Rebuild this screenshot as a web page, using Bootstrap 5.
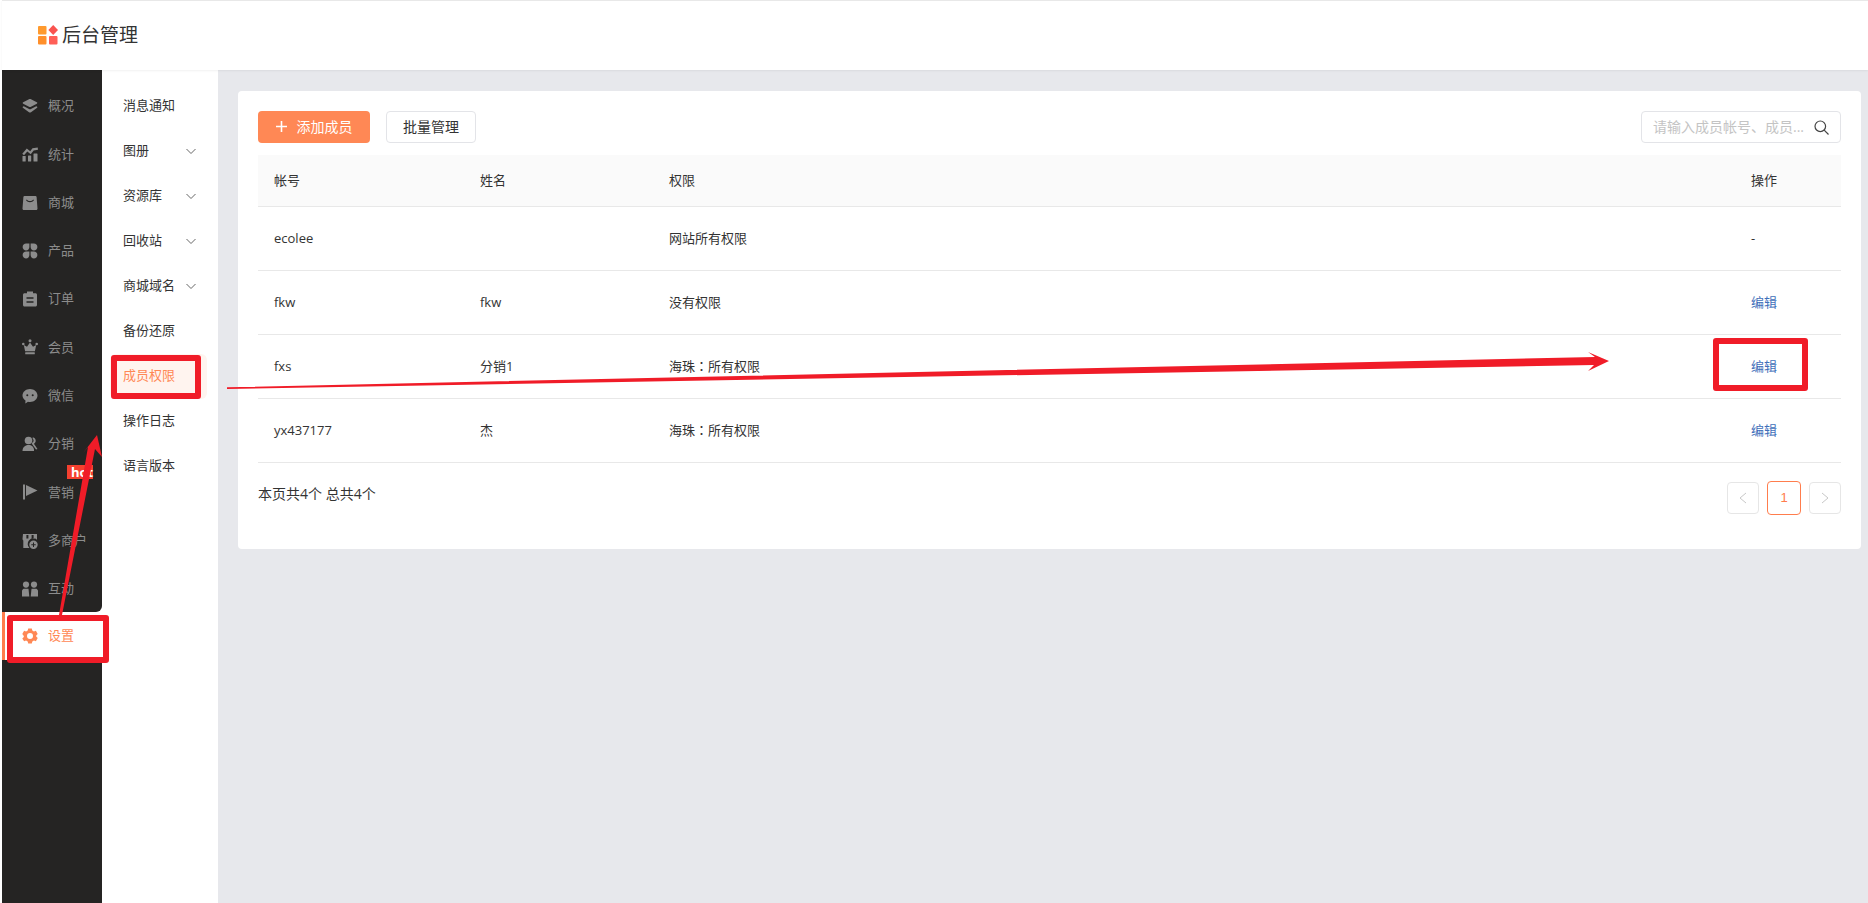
<!DOCTYPE html>
<html lang="zh-CN">
<head>
<meta charset="utf-8">
<title>后台管理</title>
<link href="https://cdn.jsdelivr.net/npm/bootstrap@5.3.0/dist/css/bootstrap.min.css" rel="stylesheet">
<style>
html,body{height:100%}
body{background:#e7e8ec;font-family:"Open Sans","Noto Sans CJK SC",sans-serif;font-size:13px;color:#333;overflow:hidden;position:relative}
.page-shell{height:903px;padding-left:2px;background:linear-gradient(#fff,#fff) left/2px 100% no-repeat}
.top-head{height:70px;background:#fff;border-top:1px solid #e8e8e8;padding-left:36px;padding-bottom:1px;box-shadow:0 1px 2px rgba(0,0,0,.06);position:relative}
.top-title{font-size:19px;color:#333;margin-left:4px}
.main-body{height:833px}
.nav-dark{width:100px;background:#252423;flex:none}
.dark-wrap{background:#fff;height:542px}
.dark-upper{height:542px;background:#252423;padding-top:12px;border-bottom-right-radius:6px}
.nav-one{height:48.27px;padding-left:20px;color:#8c8c8c;gap:10px;position:relative;white-space:nowrap}
.nav-one svg{width:16px;height:16px;fill:#8c8c8c;flex:none}
.nav-active{height:48px;background:#fff;color:#ff8855;border-left:3px solid #ff7d4d;padding-left:17px}
.nav-active svg{fill:#ff8855}
.hot-tag{position:absolute;left:65px;top:45px;width:26px;height:14px;background:#f5402f;color:#fff;font-size:13px;font-weight:700;line-height:14px;padding-left:4px}
.nav-sub{width:116px;background:#fff;flex:none;padding-top:13.5px}
.sub-one{height:45px;padding:0 22px 0 21px;color:#333;margin:0}
.sub-one svg{width:10px;height:10px;stroke:#666;fill:none;stroke-width:1}
.sub-active{color:#ff8855;background:#fff4ef;border-radius:6px;margin:0 11px 0 8px;padding:0 13px;height:45px}
.content-area{padding:21px 7px 0 20px;min-width:0}
.panel-main{background:#fff;border-radius:4px;height:458px;padding:20px}
.tool-row{height:32px;margin-bottom:12px}
.btn-add{background:#ff8855;color:#fff;border:0;border-radius:4px;width:112px;height:32px;font-size:14px;padding:0 0 2px;gap:10px}
.btn-add:hover{background:#ff8855;color:#fff}
.btn-batch{background:#fff;color:#333;border:1px solid #e3e4e8;border-radius:4px;width:90px;height:32px;font-size:14px;padding:0 0 2px;margin-left:16px}
.search-wrap{width:200px;height:32px;border:1px solid #e3e4e8;border-radius:4px;padding:0 11px}
.search-wrap span{color:#c4c4c4;white-space:nowrap;font-size:14px;margin-bottom:2px}
.search-wrap svg{width:15px;height:15px;stroke:#444;fill:none;stroke-width:1.2;flex:none}
.data-grid{--bs-table-border-color:#e8e8e8;table-layout:fixed;margin-bottom:0;color:#333;width:1583px}
.data-grid th{background:#fafafa;font-weight:400;height:51px;vertical-align:middle;padding:0 16px;font-size:13px;color:#333}
.data-grid td{height:64px;vertical-align:middle;padding:1px 16px 0;font-size:13px;color:#333}
.data-grid .edit-link{color:#3f6fba;text-decoration:none}
.colon-mid{font-family:"Noto Sans CJK TC",sans-serif}
.pager-row{padding-top:18px}
.page-info{padding-top:2px;font-size:14px}
.page-cell{width:32px;height:32px;border:1px solid #e6e6e6;border-radius:4px;background:#fff;padding:0}
.page-cell svg{width:10px;height:12px;stroke:#c8c8c8;fill:none;stroke-width:1}
.page-now{width:34px;height:34px;border-color:#ff7d4d;color:#ff7d4d;font-family:"Liberation Sans",sans-serif;font-size:13px}
.mark-box{position:absolute;border:6px solid #f01c28;border-radius:3px;pointer-events:none}
.mark-arrows{position:absolute;left:0;top:0;width:1868px;height:903px;pointer-events:none}
</style>
</head>
<body>
<div class="page-shell d-flex flex-column">
  <header class="top-head d-flex align-items-center">
    <svg width="20" height="20" viewBox="0 0 20 20"><rect x="0" y="1" width="8.5" height="8.500" rx="1" fill="#ff9a2e"/><rect x="0" y="11" width="8.5" height="8.500" rx="1" fill="#ff8f2a"/><rect x="11" y="11" width="8.5" height="8.500" rx="1" fill="#ff5f57"/><path d="M15.200 0l4.800 5-4.800 5-4.800-5z" fill="#f9534f"/></svg>
    <span class="top-title">后台管理</span>
  </header>
  <div class="main-body d-flex">
    <nav class="nav-dark d-flex flex-column">
      <div class="dark-wrap"><div class="dark-upper">
        <div class="nav-one d-flex align-items-center"><svg viewBox="0 0 16 16"><path d="M8 1c.4 0 .7.1 1 .3l5.800 3c.7.4.7 1 0 1.400l-5.800 3c-.6.300-1.400.300-2 0l-5.800-3c-.7-.4-.7-1 0-1.400l5.800-3C7.300 1.100 7.600 1 8 1z"/><path d="M1.800 8.200L7 10.900c.6.300 1.400.300 2 0l5.200-2.700.6.300c.7.4.7 1.200 0 1.600L9 14.300c-.6.300-1.400.300-2 0l-5.800-4.200c-.7-.4-.7-1.200 0-1.600z"/></svg>概况</div>
        <div class="nav-one d-flex align-items-center"><svg viewBox="0 0 16 16"><path d="M.3 7.800L4.800 2.500l3.400 2.700 2.300-2.900 5.200-.8.300 2.200-4.300.7-3 3.800-3.400-2.700L2 9.300z"/><rect x=".5" y="10" width="3.200" height="5.500" rx=".5"/><rect x="6" y="9.500" width="3.200" height="6" rx=".5"/><rect x="11.500" y="7.500" width="4" height="8" rx=".5"/></svg>统计</div>
        <div class="nav-one d-flex align-items-center"><svg viewBox="0 0 16 16"><path fill-rule="evenodd" d="M2.500 1h11c.6 0 1 .4 1.100 1l.9 11.500c.1.800-.5 1.500-1.300 1.500H1.800C1 15 .4 14.300.5 13.500L1.400 2c.1-.6.500-1 1.100-1zM4.800 4.400l-.8.9C5 6.600 6.400 7.300 8 7.300s3-.7 4-2l-.8-.9C10.400 5.400 9.300 6 8 6s-2.400-.6-3.200-1.600z"/></svg>商城</div>
        <div class="nav-one d-flex align-items-center"><svg viewBox="0 0 16 16"><path d="M4.100.6h3.300v3.300c0 1.900-1.500 3.500-3.300 3.500S.6 5.900.6 4 2.200.6 4.100.6z"/><path d="M11.900.6c1.900 0 3.500 1.500 3.500 3.400s-1.600 3.400-3.500 3.400-3.300-1.600-3.300-3.500V.6z"/><path d="M4.100 8.600h3.300v3.300c0 1.900-1.500 3.500-3.300 3.500S.6 13.900.6 12s1.600-3.400 3.500-3.400z"/><path d="M8.600 8.600h3.300c1.900 0 3.500 1.500 3.500 3.400s-1.600 3.400-3.500 3.400-3.300-1.600-3.300-3.500z"/></svg>产品</div>
        <div class="nav-one d-flex align-items-center"><svg viewBox="0 0 16 16"><path fill-rule="evenodd" d="M5 .5h6v1.800h2.500c.8 0 1.500.7 1.500 1.500v10.200c0 .8-.7 1.500-1.500 1.500h-11c-.8 0-1.500-.7-1.500-1.500V3.800c0-.8.7-1.500 1.500-1.500H5zM4.500 6.300v1.500h7V6.300zM4.500 10.300v1.500h7v-1.500z"/></svg>订单</div>
        <div class="nav-one d-flex align-items-center"><svg viewBox="0 0 16 16"><circle cx="8" cy="1.800" r="1.500"/><circle cx="1.300" cy="5" r="1.300"/><circle cx="14.700" cy="5" r="1.300"/><path d="M8 3.500l3 4.200 3.200-1.700-1.300 6.300H3.100L1.800 6 5 7.700z"/><rect x="3.200" y="13.200" width="9.600" height="2" rx=".5"/></svg>会员</div>
        <div class="nav-one d-flex align-items-center"><svg viewBox="0 0 16 16"><path fill-rule="evenodd" d="M8 1c4.100 0 7.500 2.900 7.500 6.500S12.100 14 8 14c-.7 0-1.400-.1-2-.2L3.300 15.500l.2-3C1.700 11.300.5 9.500.5 7.500.5 3.900 3.900 1 8 1zM5.300 6.300a1 1 0 1 0 0 2 1 1 0 0 0 0-2zM10.700 6.300a1 1 0 1 0 0 2 1 1 0 0 0 0-2z"/></svg>微信</div>
        <div class="nav-one d-flex align-items-center"><svg viewBox="0 0 16 16"><circle cx="6.500" cy="4.500" r="3.800"/><path d="M.5 15c0-3.500 2.500-6 6-6s5 2 5.500 4.500V15z"/><path d="M10.800 1.200c1.800.5 2.900 1.900 2.900 3.500 0 1.300-.7 2.400-1.800 3l3.600 5.300-1.500.6-3.700-5.100-.6-1.500c1.200-.5 1.900-1.400 1.900-2.500 0-.9-.4-1.600-1-2.100z"/></svg>分销<span class="hot-tag">hot</span></div>
        <div class="nav-one d-flex align-items-center"><svg viewBox="0 0 16 16"><rect x="1" y=".5" width="2" height="15"/><path d="M4 1l11.500 5.500L4 12z"/></svg>营销</div>
        <div class="nav-one d-flex align-items-center"><svg viewBox="0 0 16 16"><path fill-rule="evenodd" d="M1 1h14v5.800a5 5 0 0 0-7.500 8.200H1.300V7.500A2 2 0 0 1 .5 6zM4.400 2v3.500h2V2zM9.600 2v3.500h2V2z"/><path fill-rule="evenodd" d="M11.500 7.500a4.200 4.200 0 1 1 0 8.400 4.200 4.200 0 0 1 0-8.400zM11 9.500v1.700H9.300v1H11v1.700h1v-1.700h1.700v-1H12V9.500z"/></svg>多商户</div>
        <div class="nav-one d-flex align-items-center"><svg viewBox="0 0 16 16"><circle cx="4" cy="3.600" r="3.100"/><circle cx="12" cy="3.600" r="3.100"/><path d="M1.500 7.800h5L7.300 15.500H0V9.300z"/><path d="M9.500 7.800h5L16 9.300v6.200H8.700z"/></svg>互动</div>
      </div></div>
      <div class="nav-one nav-active d-flex align-items-center"><svg viewBox="0 0 16 16"><path fill-rule="evenodd" d="M6.200.4h3.600l.5 2.100 1.600.9 2-.6 1.800 3.100-1.500 1.500v1.200l1.500 1.500-1.800 3.100-2-.6-1.600.9-.5 2.100H6.200l-.5-2.100-1.600-.9-2 .6L.3 10.600l1.500-1.500V7.900L.3 5.900l1.800-3.100 2 .6 1.600-.9zM8 5a3 3 0 1 0 0 6 3 3 0 0 0 0-6z"/></svg>设置</div>
    </nav>
    <aside class="nav-sub">
      <div class="sub-one d-flex align-items-center">消息通知</div>
      <div class="sub-one d-flex align-items-center justify-content-between">图册<svg viewBox="0 0 10 10"><path d="M.5 3l4.500 4.500L9.500 3"/></svg></div>
      <div class="sub-one d-flex align-items-center justify-content-between">资源库<svg viewBox="0 0 10 10"><path d="M.5 3l4.500 4.500L9.500 3"/></svg></div>
      <div class="sub-one d-flex align-items-center justify-content-between">回收站<svg viewBox="0 0 10 10"><path d="M.5 3l4.500 4.500L9.500 3"/></svg></div>
      <div class="sub-one d-flex align-items-center justify-content-between">商城域名<svg viewBox="0 0 10 10"><path d="M.5 3l4.500 4.500L9.500 3"/></svg></div>
      <div class="sub-one d-flex align-items-center">备份还原</div>
      <div class="sub-one sub-active d-flex align-items-center">成员权限</div>
      <div class="sub-one d-flex align-items-center">操作日志</div>
      <div class="sub-one d-flex align-items-center">语言版本</div>
    </aside>
    <main class="content-area flex-grow-1">
      <section class="panel-main">
        <div class="tool-row d-flex align-items-center justify-content-between">
          <div class="d-flex">
            <button type="button" class="btn btn-add d-flex align-items-center justify-content-center"><svg width="11" height="11" viewBox="0 0 11 11"><path d="M4.700 0h1.600v4.700H11v1.600H6.300V11H4.700V6.300H0V4.700h4.700z" fill="#fff"/></svg>添加成员</button>
            <button type="button" class="btn btn-batch">批量管理</button>
          </div>
          <div class="search-wrap d-flex align-items-center justify-content-between"><span>请输入成员帐号、成员...</span><svg viewBox="0 0 15 15"><circle cx="6.300" cy="6.300" r="5.300"/><path d="M10.200 10.200l4.300 4.300"/></svg></div>
        </div>
        <table class="table data-grid">
          <colgroup><col style="width:206px"><col style="width:189px"><col style="width:1082px"><col></colgroup>
          <thead><tr><th>帐号</th><th>姓名</th><th>权限</th><th>操作</th></tr></thead>
          <tbody>
            <tr><td>ecolee</td><td></td><td>网站所有权限</td><td>-</td></tr>
            <tr><td>fkw</td><td>fkw</td><td>没有权限</td><td><a class="edit-link" href="#">编辑</a></td></tr>
            <tr><td>fxs</td><td>分销1</td><td>海珠<span class="colon-mid" lang="zh-TW">：</span>所有权限</td><td><a class="edit-link" href="#">编辑</a></td></tr>
            <tr><td>yx437177</td><td>杰</td><td>海珠<span class="colon-mid" lang="zh-TW">：</span>所有权限</td><td><a class="edit-link" href="#">编辑</a></td></tr>
          </tbody>
        </table>
        <div class="pager-row d-flex justify-content-between align-items-start">
          <div class="page-info">本页共4个 总共4个</div>
          <div class="d-flex align-items-center gap-2">
            <button type="button" class="btn page-cell d-flex align-items-center justify-content-center"><svg viewBox="0 0 10 12"><path d="M8 1L2 6l6 5"/></svg></button>
            <button type="button" class="btn page-cell page-now d-flex align-items-center justify-content-center">1</button>
            <button type="button" class="btn page-cell d-flex align-items-center justify-content-center"><svg viewBox="0 0 10 12"><path d="M2 1l6 5-6 5"/></svg></button>
          </div>
        </div>
      </section>
    </main>
  </div>
</div>
<svg class="mark-arrows" viewBox="0 0 1868 903">
  <path d="M59 615L88 447 83 453 97 435 102 457 95 449 62 615z" fill="#f01c28"/>
  <path d="M227 387.300L1595 357 1588 352 1609 361 1588 371 1594 365 227 389z" fill="#f01c28"/>
</svg>
<div class="mark-box" style="left:7px;top:615px;width:102px;height:48px"></div>
<div class="mark-box" style="left:111px;top:355px;width:90px;height:44px"></div>
<div class="mark-box" style="left:1713px;top:338px;width:95px;height:53px"></div>
</body>
</html>
